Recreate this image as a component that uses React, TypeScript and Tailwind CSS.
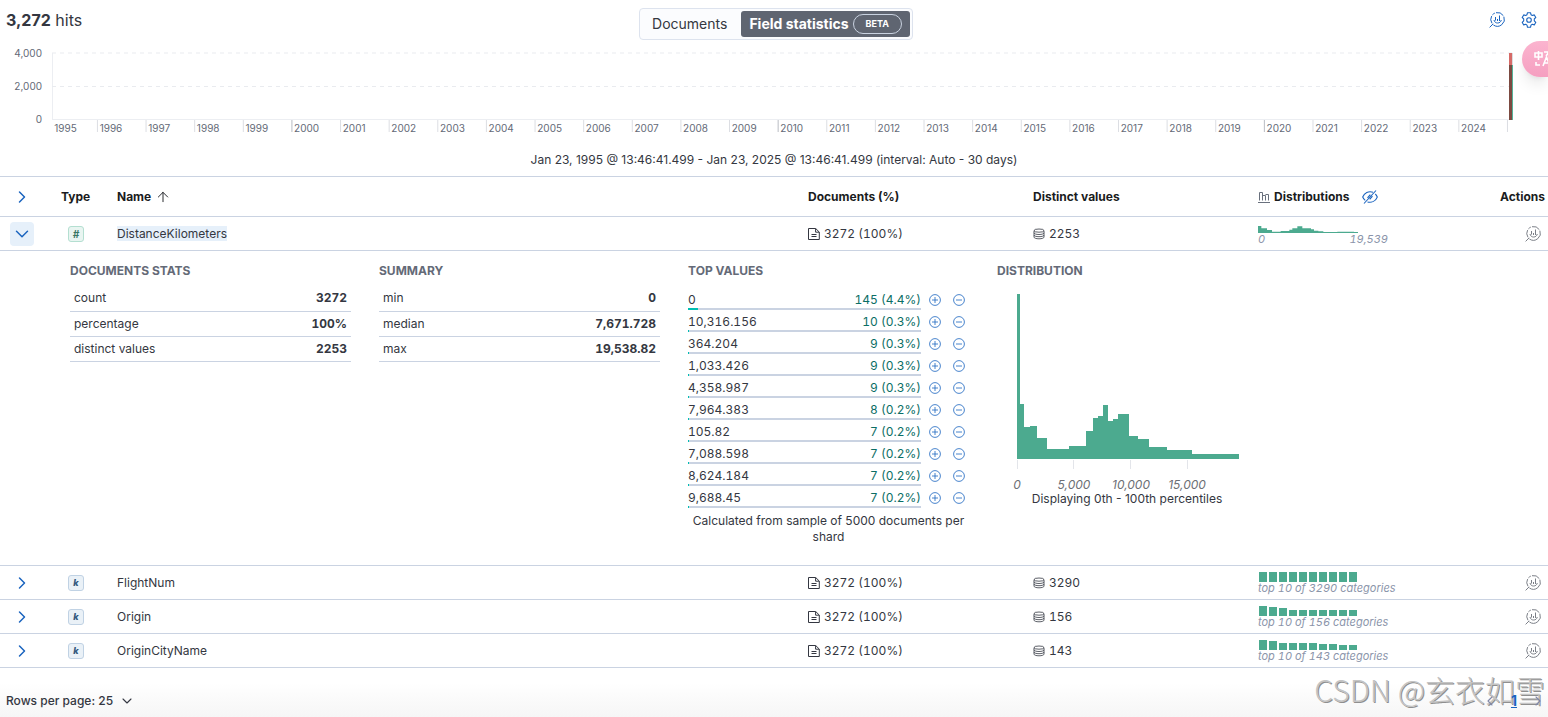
import React from 'react';
import { ArrowUp, ChevronDown, ChevronLeft, ChevronRight } from 'lucide-react';

interface FieldRow {
  name: string;
  distinct: string;
  bars: number[];
}

const YEARS = Array.from({ length: 30 }, (_, i) => 1995 + i);
// first year boundary and year width, as a percentage of the plot
const FIRST_TICK = 3.11;
const TICK_STEP = 3.328;

const KEYWORD_FIELDS: FieldRow[] = [
  { name: 'FlightNum', distinct: '3290', bars: [10, 10, 10, 10, 10, 10, 10, 10, 10, 10] },
  { name: 'Origin', distinct: '156', bars: [10, 9, 8, 6, 6, 6, 6, 6, 6, 6] },
  { name: 'OriginCityName', distinct: '143', bars: [10, 9, 7, 7, 7, 7, 6, 6, 5, 5] },
];

const DOC_STATS = [['count', '3272'], ['percentage', '100%'], ['distinct values', '2253']];
const SUMMARY = [['min', '0'], ['median', '7,671.728'], ['max', '19,538.82']];

const TOP_VALUES = [
  { value: '0', count: 145, pct: 4.4 },
  { value: '10,316.156', count: 10, pct: 0.3 },
  { value: '364.204', count: 9, pct: 0.3 },
  { value: '1,033.426', count: 9, pct: 0.3 },
  { value: '4,358.987', count: 9, pct: 0.3 },
  { value: '7,964.383', count: 8, pct: 0.2 },
  { value: '105.82', count: 7, pct: 0.2 },
  { value: '7,088.598', count: 7, pct: 0.2 },
  { value: '8,624.184', count: 7, pct: 0.2 },
  { value: '9,688.45', count: 7, pct: 0.2 },
];

// [start, end, height] of every bucket
const BUCKETS = [
  [0, 10, 494], [10, 20, 165], [20, 38, 97], [38, 60, 100], [60, 90, 63], [90, 157, 29],
  [157, 206, 39], [206, 228, 85], [228, 244, 122], [244, 259, 128], [259, 274, 162],
  [274, 288, 114], [288, 303, 119], [303, 335, 135], [335, 363, 69], [363, 395, 60],
  [395, 449, 36], [449, 525, 26], [525, 665, 15],
];

const InspectIcon = () => (
  <svg width="16" height="16" viewBox="0 0 16 16" fill="none" stroke="currentColor" strokeWidth="1">
    <path d="M3 11.3A7 7 0 0 1 2.6 4.1M3.4 2.9A7 7 0 0 1 5.8 1.1M7 .7A7 7 0 0 1 14.3 3.6" />
    <path d="M14.9 4.7A7 7 0 0 1 4.4 13" />
    <path d="M4.2 11.8.6 15.4" />
    <path d="M5 8c.4 2 1.800 3 3.600 3s3.200-1 3.700-3M6.500 5v3.500M8.500 7v2M10.500 3.500v5.500" />
  </svg>
);

const GearIcon = () => (
  <svg width="16" height="16" viewBox="0 0 16 16" fill="none" stroke="currentColor" strokeWidth="1.1" strokeLinejoin="round">
    <path d="M6.5.7h3l.5 2 1.3.8 2-.6 1.5 2.6-1.5 1.4v1.9l1.5 1.5-1.5 2.6-2-.6-1.3.8-.5 2.2h-3L6 13.1l-1.3-.8-2 .6-1.5-2.6 1.5-1.5V6.9L1.2 5.5l1.5-2.6 2 .6L6 2.7z" />
    <circle cx="8" cy="8" r="2.3" />
  </svg>
);

const DocumentIcon = () => (
  <svg width="12" height="12" viewBox="0 0 12 12" fill="none" stroke="currentColor" strokeWidth="1">
    <path d="M.5.5h7.2l3.6 3.6v7.4H.5zM7.6.6v3.6h3.6M3.5 6.5h5M3.5 8.5h5" />
  </svg>
);

const DatabaseIcon = () => (
  <svg width="12" height="12" viewBox="0 0 12 12" fill="none" stroke="currentColor" strokeWidth="0.8">
    <ellipse cx="6" cy="2.6" rx="5" ry="1.6" />
    <path d="M1 2.6v6.5c0 1 2.2 1.7 5 1.7s5-.7 5-1.7V2.6M1 4.8c0 1 2.2 1.7 5 1.7s5-.7 5-1.7M1 7c0 1 2.2 1.7 5 1.7S11 8 11 7" />
  </svg>
);

const BarsIcon = () => (
  <svg width="12" height="12" viewBox="0 0 12 12" fill="none" stroke="#69707d" strokeWidth="1">
    <path d="M1.5 9.5v-8h3v8M4.5 4.5h3v5M7.5 3.5h3v6M0 11.5h12" />
  </svg>
);

const EyeClosedIcon = () => (
  <svg width="16" height="14" viewBox="0 0 16 14" fill="none" stroke="currentColor" strokeWidth="1.1">
    <path d="M14 .5 2 13.500M11 2.200C6.500.8 2.300 2.800.7 7c.6 1.400 1.400 2.600 2.500 3.400M13.300 4c.8.8 1.500 1.800 2 3-1.600 4-5.600 6-9.800 5M5.500 7.800 8.300 4.700M7.700 9.300l2.800-3.100" />
  </svg>
);

const FilterIcon = ({ minus }: { minus?: boolean }) => (
  <svg width="12" height="12" viewBox="0 0 12 12" fill="none" stroke="currentColor" strokeWidth="0.8">
    <circle cx="6" cy="6" r="5.4" />
    <path d={minus ? 'M3 6h6' : 'M3 6h6M6 3v6'} />
  </svg>
);

const DocumentsCount = () => (
  <span className="flex items-center gap-1 tabular-nums"><DocumentIcon /> 3272 (100%)</span>
);

const DistinctCount = ({ value }: { value: string }) => (
  <span className="flex items-center gap-1 tabular-nums"><DatabaseIcon /> {value}</span>
);

const InspectCell = ({ name }: { name: string }) => (
  <td className="pr-[7px]">
    <button type="button" aria-label={`Explore ${name}`} className="ml-auto block text-[#7b7f87]"><InspectIcon /></button>
  </td>
);

const StatTable = ({ title, rows }: { title: string; rows: string[][] }) => (
  <section className="w-[281px] shrink-0">
    <h3 className="font-bold text-[#646a77]">{title}</h3>
    <table className="mt-[7px] w-full">
      <tbody>
        {rows.map(([label, value]) => (
          <tr key={label} className="h-[25px] border-b border-[#cad3e2]">
            <th scope="row" className="px-1 text-left font-normal">{label}</th>
            <td className="px-1 text-right font-bold tabular-nums">{value}</td>
          </tr>
        ))}
      </tbody>
    </table>
  </section>
);

const TopValues = () => (
  <section className="w-[281px] shrink-0">
    <h3 className="font-bold text-[#646a77]">TOP VALUES</h3>
    <ul className="mt-[13px]">
      {TOP_VALUES.map((row) => (
        <li key={row.value} className="flex h-[22px]">
          <div className="w-[233px] shrink-0 tabular-nums">
            <div className="flex justify-between">
              <span>{row.value}</span>
              <span className="text-[#0b6e65]">{row.count} ({row.pct}%)</span>
            </div>
            <div className="h-[2px] bg-[#cad3e2]">
              <div className="h-full min-w-px bg-[#00bfb3]" style={{ width: `${row.pct}%` }} />
            </div>
          </div>
          <button type="button" aria-label={`Filter for ${row.value}`} className="ml-2 flex h-4 w-3 shrink-0 items-center text-[#1a64bf]"><FilterIcon /></button>
          <button type="button" aria-label={`Filter out ${row.value}`} className="ml-3 flex h-4 w-3 shrink-0 items-center text-[#1a64bf]"><FilterIcon minus /></button>
        </li>
      ))}
    </ul>
    <p className="mt-px text-center">Calculated from sample of 5000 documents per shard</p>
  </section>
);

const Distribution = () => (
  <section className="w-[260px] shrink-0">
    <h3 className="font-bold text-[#646a77]">DISTRIBUTION</h3>
    <svg width="260" height="212" className="block">
      <path d="M20.5 181v9M76.5 181v9M133.5 181v9M190.5 181v9" stroke="#e3e5ea" />
      <svg x="20" y="15" width="222" height="165" viewBox="0 0 665 494" preserveAspectRatio="none" shapeRendering="crispEdges">
        {BUCKETS.map(([start, end, height]) => (
          <rect key={start} x={start} y={494 - height} width={end - start} height={height} fill="#4caa8f" />
        ))}
      </svg>
      <g fontSize="12" fontStyle="italic" textAnchor="middle" fill="#6c6f75">
        <text x="20" y="210">0</text>
        <text x="77" y="210">5,000</text>
        <text x="134" y="210">10,000</text>
        <text x="190" y="210">15,000</text>
      </g>
    </svg>
    <p className="text-center">Displaying 0th - 100th percentiles</p>
  </section>
);

const HitsChart = () => (
  <div className="flex pr-[35px] text-[10px] leading-[10px] text-[#646a77]">
    <div className="mt-1 flex h-[76px] w-[52px] shrink-0 flex-col justify-between pr-[10px] text-right">
      <span>4,000</span>
      <span>2,000</span>
      <span>0</span>
    </div>
    <svg className="h-[96px] min-w-0 flex-1" fill="#646a77">
      <line x1="0.5" x2="0.5" y1="9" y2="76" stroke="#eceef2" />
      <g stroke="#e9ebef" strokeDasharray="4 4">
        <line x1="0" x2="100%" y1="9" y2="9" />
        <line x1="0" x2="100%" y1="42.5" y2="42.5" />
      </g>
      <line x1="0" x2="100%" y1="75.5" y2="75.5" stroke="#eceef2" />
      {YEARS.map((year, i) => (
        <g key={year}>
          <line
            x1={`${FIRST_TICK + TICK_STEP * i}%`}
            x2={`${FIRST_TICK + TICK_STEP * i}%`}
            y1="76"
            y2="88"
            stroke={year % 10 === 9 ? '#b9bcc3' : '#dcdee3'}
          />
          <text x={i === 0 ? '0.15%' : `${FIRST_TICK + 0.15 + TICK_STEP * (i - 1)}%`} y="88">{year}</text>
        </g>
      ))}
      <svg x="100%" overflow="visible">
        <rect x="-4" y="21" width="4" height="55" fill="#54b399" />
        <rect x="-4" y="9" width="4" height="12" fill="#dcdcdf" />
        <rect x="-4" y="9" width="3" height="12" fill="#d66a67" />
        <rect x="-4" y="21" width="3" height="55" fill="#7c4a41" />
      </svg>
    </svg>
  </div>
);

const App: React.FC = () => (
  <div className="relative overflow-hidden bg-white font-[Inter,'Noto_Sans_CJK_SC',sans-serif] text-xs leading-4 text-[#343741]">
    <header className="flex h-11 items-start pt-2 pl-1">
      <div className="flex-1 text-base leading-6"><h1 className="pl-[2px]"><strong>3,272</strong> hits</h1></div>
      <div className="flex h-8 items-center rounded-[4px] border border-[#dde3ee] bg-[#fbfcfe] p-[2px] text-sm">
        <button type="button" className="px-[10px]">Documents</button>
        <button type="button" aria-pressed="true" className="ml-1 flex h-[26px] items-center gap-1 rounded-[3px] bg-[#5f6571] px-2 font-bold text-white">
          Field statistics
          <span className="rounded-full border border-[#c9d2e0] px-3 text-[9px] leading-[18px]">BETA</span>
        </button>
      </div>
      <div className="flex-1">
        <div className="flex justify-end gap-4 pt-1 pr-[11px] text-[#1a64bf]">
          <button type="button" aria-label="Explore"><InspectIcon /></button>
          <button type="button" aria-label="Settings"><GearIcon /></button>
        </div>
      </div>
    </header>

    <HitsChart />
    <p className="mt-3 mb-2 text-center">Jan 23, 1995 @ 13:46:41.499 - Jan 23, 2025 @ 13:46:41.499 (interval: Auto - 30 days)</p>

    <table className="w-full table-fixed text-left">
      <colgroup>
        <col className="w-[61px]" />
        <col className="w-14" />
        <col />
        <col className="w-[225px]" />
        <col className="w-[225px]" />
        <col className="w-[200px]" />
        <col className="w-[90px]" />
      </colgroup>
      <thead>
        <tr className="h-10 border-y border-[#cad3e2] font-semibold text-[#1a1c21]">
          <th className="pl-3">
            <button type="button" aria-label="Expand all" className="block text-[#1a64bf]"><ChevronRight size={20} strokeWidth={1.8} /></button>
          </th>
          <th>Type</th>
          <th>
            <button type="button" className="flex items-center gap-1">Name <ArrowUp size={16} strokeWidth={1.4} /></button>
          </th>
          <th>Documents (%)</th>
          <th>Distinct values</th>
          <th>
            <span className="flex items-center gap-1">
              <BarsIcon /> Distributions
              <button type="button" aria-label="Hide distributions" className="ml-2 text-[#1a64bf]"><EyeClosedIcon /></button>
            </span>
          </th>
          <th className="pr-[3px] text-right">Actions</th>
        </tr>
      </thead>
      <tbody>
        <tr className="h-[34px] border-b border-[#cad3e2]">
          <td className="pl-[10px]">
            <button type="button" aria-label="Collapse DistanceKilometers" className="flex size-6 items-center justify-center rounded-[4px] bg-[#e6f0fa] text-[#1a64bf]"><ChevronDown size={22} strokeWidth={1.6} /></button>
          </td>
          <td className="pl-[7px]">
            <span className="flex size-4 items-center justify-center rounded-[3px] border border-[#b4dfd1] bg-[#e9f5f1] text-[10px] font-bold text-[#387765] italic">#</span>
          </td>
          <td><span className="bg-[#e6f0fa]">DistanceKilometers</span></td>
          <td><DocumentsCount /></td>
          <td><DistinctCount value="2253" /></td>
          <td className="text-[11px] leading-3 text-[#8b95aa] italic">
            <svg width="100" height="10" viewBox="0 0 300 30" className="block">
              <path d="M0 30V9H10V16H27V21H42V26H68V24H94V20H103V16H118V10H133V16H159V19H168V23H181V25H196V27H238V26H288V27H300V30z" fill="#4caa8f" />
            </svg>
            <span className="flex w-[130px] justify-between tabular-nums"><span>0</span><span>19,539</span></span>
          </td>
          <InspectCell name="DistanceKilometers" />
        </tr>
        <tr className="border-b border-[#cad3e2]">
          <td colSpan={7} className="pt-3 pb-5 pl-[70px] align-top">
            <div className="flex gap-7">
              <StatTable title="DOCUMENTS STATS" rows={DOC_STATS} />
              <StatTable title="SUMMARY" rows={SUMMARY} />
              <TopValues />
              <Distribution />
            </div>
          </td>
        </tr>
        {KEYWORD_FIELDS.map((field) => (
          <tr key={field.name} className="h-[34px] border-b border-[#cad3e2]">
            <td className="pl-3">
              <button type="button" aria-label={`Expand ${field.name}`} className="block text-[#1a64bf]"><ChevronRight size={20} strokeWidth={1.8} /></button>
            </td>
            <td className="pl-[7px]">
              <span className="flex size-4 items-center justify-center rounded-[3px] border border-[#c0d2e4] bg-[#eaf1f7] text-[9px] font-extrabold text-[#35597d] italic">k</span>
            </td>
            <td>{field.name}</td>
            <td><DocumentsCount /></td>
            <td><DistinctCount value={field.distinct} /></td>
            <td className="text-[11px] leading-3 text-[#8b95aa] italic">
              <div className="flex h-[10px] items-end gap-[2px] pl-px">
                {field.bars.map((height, i) => (
                  <span key={i} className="w-2 bg-[#4caa8f]" style={{ height }} />
                ))}
              </div>
              <span className="tabular-nums">top 10 of {field.distinct} categories</span>
            </td>
            <InspectCell name={field.name} />
          </tr>
        ))}
      </tbody>
    </table>

    <footer className="flex h-[49px] items-center justify-between bg-linear-to-b from-white from-30% to-[#f6f6f6] pt-4 pr-[2px] pl-[6px] font-medium">
      <button type="button" className="flex items-center gap-[6px]">Rows per page: 25 <ChevronDown size={16} strokeWidth={1.6} /></button>
      <nav aria-label="Pagination" className="relative z-10 flex items-center gap-[13px] text-[#8087a8]">
        <button type="button" aria-label="Previous page"><ChevronLeft size={16} strokeWidth={1.6} /></button>
        <a href="#page-1" className="text-sm leading-4 font-bold text-[#1a64bf] underline">1</a>
        <button type="button" aria-label="Next page"><ChevronRight size={16} strokeWidth={1.6} /></button>
      </nav>
    </footer>

    <button type="button" aria-label="Translate" className="absolute top-[41px] right-0 h-9 w-[26px] overflow-hidden rounded-l-full bg-linear-to-b from-[#fbb4cf] to-[#f59fc0] pl-3 text-white shadow-lg">
      <svg width="20" height="18" viewBox="0 0 20 18" fill="none" stroke="currentColor" strokeWidth="1.6">
        <path d="M1 3h7v4H1zM4.5 1v9M10 2h5l-3 4M2 12v3h4M9 16l3.500-9 3.500 9M10.500 13h4" />
      </svg>
    </button>
    <div className="pointer-events-none absolute right-[3px] bottom-2 text-[30px] leading-10 font-light whitespace-nowrap text-[#c4c4c4] [font-family:'Noto_Sans_CJK_SC',sans-serif] [text-shadow:1px_1px_0_#8f8f8f]">CSDN @玄衣如雪</div>
  </div>
);

export default App;
